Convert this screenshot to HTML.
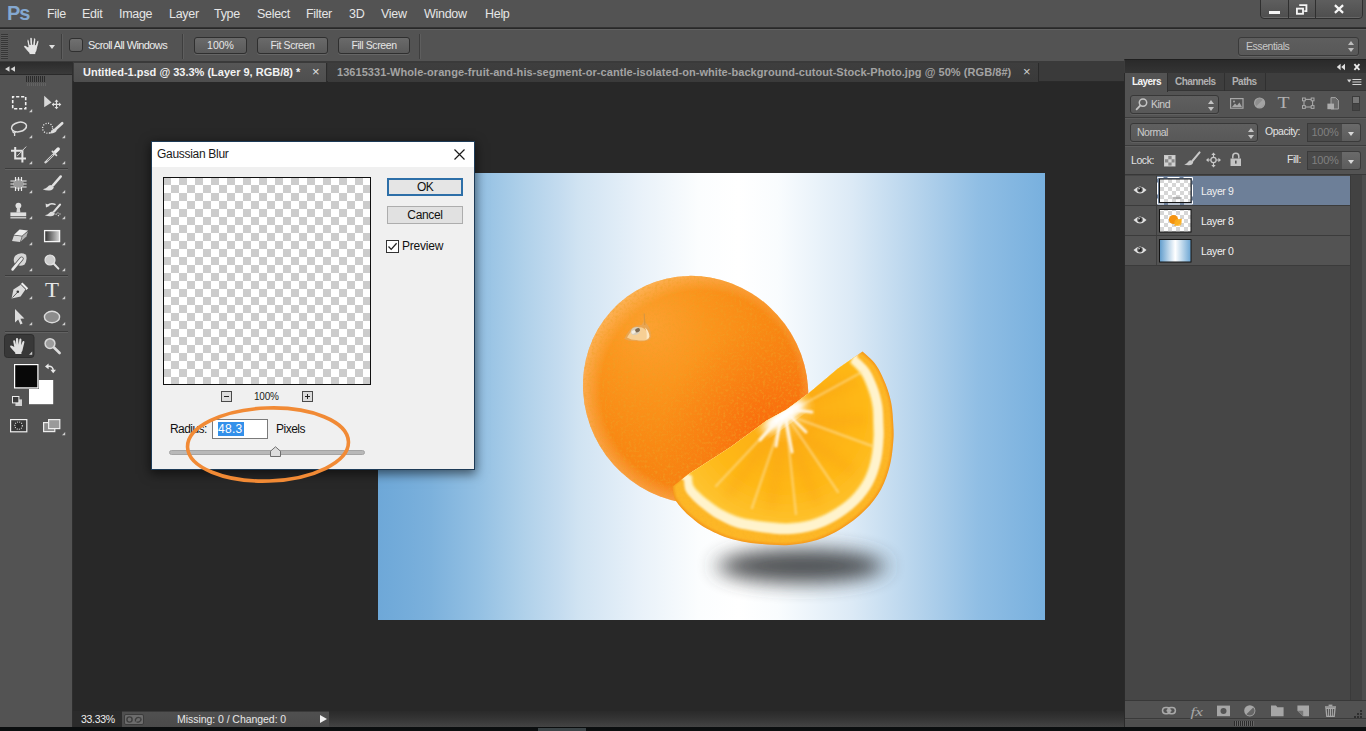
<!DOCTYPE html>
<html lang="en">
<head>
<meta charset="utf-8">
<title>Photoshop - Gaussian Blur</title>
<style>
*{box-sizing:border-box;margin:0;padding:0}
html,body{width:1366px;height:731px;overflow:hidden;background:#282828;font-family:"Liberation Sans",sans-serif;}
.abs{position:absolute}
#app{position:relative;width:1366px;height:731px;overflow:hidden;background:#282828}
/* menu bar */
#menubar{left:0;top:0;width:1366px;height:28px;background:#535353;border-bottom:1px solid #333}
#menubar span.m{position:absolute;top:7px;font-size:12.500px;color:#e6e6e6;letter-spacing:-0.3px;white-space:nowrap}
#pslogo{left:7px;top:1px;font-size:20px;font-weight:bold;color:#84a8d0;letter-spacing:-1px;line-height:24px}
/* options bar */
#optbar{left:0;top:29px;width:1366px;height:33px;background:#535353;border-top:1px solid #626262;border-bottom:1px solid #3a3a3a}
.obtn{position:absolute;top:7px;height:17px;border:1px solid #2f2f2f;border-radius:3px;background:linear-gradient(#6a6a6a,#5a5a5a);color:#e6e6e6;font-size:10.5px;text-align:center;line-height:15px;box-shadow:0 1px 0 #666}
/* tab bar */
#tabbar{left:73px;top:62px;width:1051px;height:20px;background:#3a3a3a;border-bottom:1px solid #2a2a2a}
.tab{position:absolute;top:1px;height:19px;font-size:11px;font-weight:bold;white-space:nowrap;line-height:19px}
/* tools */
#tools{left:0;top:62px;width:73px;height:665px;background:#535353;border-right:1px solid #2e2e2e}
/* right */
#rightdock{left:1124px;top:59px;width:242px;height:668px;background:#2a2a2a}
#layers{left:1125px;top:62px;width:241px;height:665px;background:#535353}
/* status */
#status{left:73px;top:711px;width:1051px;height:17px;background:linear-gradient(#2a2a2a,#333 40%,#464646)}
#bottom{left:0;top:727px;width:1366px;height:4px;background:#0b0e0f}

.ptab{top:13.500px;font-size:10px;font-weight:bold;letter-spacing:-.55px}
.dd{border:1px solid #383838;border-radius:3px;background:linear-gradient(#5f5f5f,#585858);box-shadow:0 1px 0 #606060}
.ua{width:0;height:0;border-left:3px solid transparent;border-right:3px solid transparent;border-bottom:4px solid #c4c4c4}
.da{width:0;height:0;border-left:3px solid transparent;border-right:3px solid transparent;border-top:4px solid #c4c4c4}
.hsep{left:0;width:241px;height:1px;background:#3c3c3c;box-shadow:0 1px 0 #5d5d5d}
.inp{width:36px;height:19px;border:1px solid #3a3a3a;background:#4a4a4a;color:#808080;font-size:11px;line-height:17px;text-align:center;letter-spacing:-.3px}
.ddb{width:19px;height:19px;border:1px solid #3a3a3a;border-left:none;background:linear-gradient(#6a6a6a,#5c5c5c);border-radius:0 3px 3px 0}
.ddb i{position:absolute;left:6px;top:8px;width:0;height:0;border-left:3.500px solid transparent;border-right:3.500px solid transparent;border-top:4px solid #d8d8d8}
.lrow{left:0;width:225px;height:30px;background:#535353;border-bottom:1px solid #3b3b3b}
.lrow b{position:absolute;left:31px;top:0;width:194px;height:29px;border-left:1px solid #3f3f3f;display:block}
.lname{left:76px;font-size:10.500px;color:#f0f0f0;letter-spacing:-.35px}

.zb{width:11px;height:11px;border:1px solid #4a4a4a;background:#dcdcdc}
.zb i{position:absolute;background:#222;display:block}
</style>
</head>
<body>
<div id="app">
  <!-- MENU BAR -->
  <div id="menubar" class="abs">
    <span id="pslogo" class="abs">Ps</span>
    <span class="m" style="left:47px">File</span>
    <span class="m" style="left:82px">Edit</span>
    <span class="m" style="left:119px">Image</span>
    <span class="m" style="left:169px">Layer</span>
    <span class="m" style="left:214px">Type</span>
    <span class="m" style="left:257px">Select</span>
    <span class="m" style="left:306px">Filter</span>
    <span class="m" style="left:349px">3D</span>
    <span class="m" style="left:381px">View</span>
    <span class="m" style="left:424px">Window</span>
    <span class="m" style="left:485px">Help</span>
    <div class="abs" style="left:1260px;top:-3px;width:103px;height:22px;border:1px solid #2f2f2f;border-radius:0 0 4px 4px;background:linear-gradient(#606060,#4e4e4e);box-shadow:inset 0 -1px 0 #666"></div>
    <div class="abs" style="left:1288px;top:0;width:1px;height:18px;background:#2f2f2f"></div>
    <div class="abs" style="left:1315px;top:0;width:1px;height:18px;background:#2f2f2f"></div>
    <div class="abs" style="left:1269px;top:11px;width:11px;height:3px;background:#f4f4f4"></div>
    <svg class="abs" style="left:1295px;top:4px" width="14" height="12" viewBox="0 0 14 13"><path d="M4 1.2h7.8v6.6H9.5" fill="none" stroke="#f4f4f4" stroke-width="2"/><rect x="1.5" y="5" width="6.6" height="5.6" fill="none" stroke="#f4f4f4" stroke-width="2"/></svg>
    <svg class="abs" style="left:1333px;top:4px" width="12" height="10" viewBox="0 0 12 11"><path d="M1.5 1.2 L10.5 9.8 M10.5 1.2 L1.5 9.8" stroke="#f6f6f6" stroke-width="2.4"/></svg>
  </div>
  <!-- OPTIONS BAR -->
  <div id="optbar" class="abs">
    <div class="abs" style="left:1px;top:4px;width:7px;height:25px;background:repeating-linear-gradient(#363636 0 1px,#5a5a5a 1px 2px)"></div>
    <svg class="abs" style="left:21px;top:6px" width="23" height="21" viewBox="0 0 20 18"><path d="M6.2 9.5 L5.2 4.2 Q5.1 3 6 3 Q6.9 3 7.1 4 L7.9 7.6 L7.7 2.2 Q7.7 1 8.7 1 Q9.7 1 9.8 2.2 L10.2 7.4 L10.9 2.4 Q11.1 1.4 12 1.5 Q12.9 1.6 12.8 2.8 L12.5 7.8 L13.8 4.4 Q14.2 3.5 15 3.8 Q15.8 4.1 15.5 5.2 L14.2 10.5 Q13.9 13 12.8 14.5 L12.8 16 L7.2 16 L7 14.6 Q5 12.6 2.6 9.6 Q1.9 8.6 2.8 8.1 Q3.7 7.7 4.6 8.5 Z" fill="#e4e4e4" stroke="#3a3a3a" stroke-width="0.6"/></svg>
    <div class="abs" style="left:49px;top:15px;width:0;height:0;border-left:3.5px solid transparent;border-right:3.5px solid transparent;border-top:4px solid #e0e0e0"></div>
    <div class="abs" style="left:61px;top:4px;width:1px;height:25px;background:#3e3e3e;box-shadow:1px 0 0 #5e5e5e"></div>
    <div class="abs" style="left:69px;top:8px;width:14px;height:14px;border:1px solid #303030;border-radius:3px;background:linear-gradient(#707070,#616161)"></div>
    <span class="abs" style="left:88px;top:9px;font-size:11px;color:#ececec;letter-spacing:-0.6px;white-space:nowrap">Scroll All Windows</span>
    <div class="abs" style="left:182px;top:4px;width:1px;height:25px;background:#3e3e3e;box-shadow:1px 0 0 #5e5e5e"></div>
    <div class="obtn" style="left:194px;width:53px">100%</div>
    <div class="obtn" style="left:257px;width:71px;letter-spacing:-.4px">Fit Screen</div>
    <div class="obtn" style="left:338px;width:72px;letter-spacing:-.4px">Fill Screen</div>
    <div class="abs" style="left:419px;top:4px;width:1px;height:25px;background:#3e3e3e;box-shadow:1px 0 0 #5e5e5e"></div>
    <div class="abs" style="left:1238px;top:7px;width:121px;height:19px;border:1px solid #3a3a3a;border-radius:3px;background:linear-gradient(#5e5e5e,#585858);box-shadow:0 1px 0 #616161"></div>
    <span class="abs" style="left:1246px;top:10px;font-size:10.5px;color:#c8c8c8;letter-spacing:-0.45px">Essentials</span>
    <div class="abs" style="left:1348px;top:11px;width:0;height:0;border-left:3px solid transparent;border-right:3px solid transparent;border-bottom:4px solid #bdbdbd"></div>
    <div class="abs" style="left:1348px;top:18px;width:0;height:0;border-left:3px solid transparent;border-right:3px solid transparent;border-top:4px solid #bdbdbd"></div>
  </div>
  <!-- TOOLS -->
  <div id="tools" class="abs">
    <div class="abs" style="left:0;top:0;width:72px;height:13px;background:linear-gradient(#2c2c2c,#3a3a3a);border-bottom:1px solid #2a2a2a"></div>
    <svg class="abs" style="left:0;top:0" width="73" height="400" viewBox="0 62 73 400">
      <defs>
        <linearGradient id="gradtool" x1="0" x2="1" y1="0" y2="0"><stop offset="0" stop-color="#2e2e2e"/><stop offset="1" stop-color="#d8d8d8"/></linearGradient>
        <path id="tri" d="M3.2 0 V3.2 H0 Z" fill="#cfcfcf"/>
        <path id="hand" d="M6.2 9.5 L5.2 4.2 Q5.1 3 6 3 Q6.9 3 7.1 4 L7.9 7.6 L7.7 2.2 Q7.7 1 8.7 1 Q9.7 1 9.8 2.2 L10.2 7.4 L10.9 2.4 Q11.1 1.4 12 1.5 Q12.9 1.6 12.8 2.8 L12.5 7.8 L13.8 4.4 Q14.2 3.5 15 3.8 Q15.8 4.1 15.5 5.2 L14.2 10.5 Q13.9 13 12.8 14.5 L12.8 16 L7.2 16 L7 14.6 Q5 12.6 2.6 9.6 Q1.9 8.6 2.8 8.1 Q3.7 7.7 4.6 8.5 Z"/>
      </defs>
      <!-- collapse arrows -->
      <path d="M9.5 66.3 L5 69 L9.5 71.7 Z M15 66.3 L10.5 69 L15 71.7 Z" fill="#d6d6d6"/>
      <!-- grip -->
      <g stroke="#2b2b2b" stroke-width="1"><path d="M26.5 76v6M28.5 76v6M30.5 76v6M32.5 76v6M34.5 76v6M36.5 76v6M38.5 76v6M40.5 76v6M42.5 76v6M44.5 76v6"/></g>
      <g stroke="#636363" stroke-width="1"><path d="M27.5 83v3M29.5 83v3M31.5 83v3M33.5 83v3M35.5 83v3M37.5 83v3M39.5 83v3M41.5 83v3M43.5 83v3M45.5 83v3"/></g>
      <!-- separators -->
      <g><path d="M5 168.5H68M5 275.5H68M5 331.5H68" stroke="#3c3c3c"/><path d="M5 169.5H68M5 276.5H68M5 332.5H68" stroke="#626262"/></g>
      <!-- marquee -->
      <rect x="12.7" y="96.7" width="13" height="12" fill="none" stroke="#f2f2f2" stroke-width="1.6" stroke-dasharray="3.2 1.8" stroke-dashoffset="1.6"/>
      <use href="#tri" x="29" y="109"/>
      <!-- move -->
      <path d="M44.2 95.8 V107.2 L51.6 102.6 Z" fill="#d8d8d8"/>
      <path d="M56.5 99.6 l2 2.2 h-1.4 v2 h2 v-1.4 l2.2 2 l-2.2 2 v-1.4 h-2 v2 h1.4 l-2 2.2 l-2-2.2 h1.4 v-2 h-2 v1.4 l-2.2-2 l2.2-2 v1.4 h2 v-2 h-1.4 Z" fill="#e2e2e2"/>
      <!-- lasso -->
      <ellipse cx="19" cy="127" rx="7.6" ry="4.7" transform="rotate(-12 19 127)" fill="none" stroke="#dedede" stroke-width="1.5"/>
      <path d="M13.2 130.2 q-1 2.2 1 2.6 q1.6 .2 1-1.6 M14.6 132.6 v3.4" fill="none" stroke="#dedede" stroke-width="1.3"/>
      <use href="#tri" x="29" y="135"/>
      <!-- quick select -->
      <circle cx="47.6" cy="128.2" r="5" fill="none" stroke="#e6e6e6" stroke-width="1.3" stroke-dasharray="1.1 1.5"/>
      <path d="M62.2 123.2 L55.6 129.2" stroke="#e0e0e0" stroke-width="2.6" stroke-linecap="round"/>
      <path d="M55.8 128.4 q1.8 2.2 -.6 3.8 q-2.8 1.8 -7 1.2 q3 -.8 3.6 -2.6 q.8 -2.4 4 -2.4Z" fill="#dcdcdc"/>
      <use href="#tri" x="62" y="135"/>
      <!-- crop -->
      <path d="M15.2 147 V158.6 H26 M11 150.8 H22.4 V162.4" fill="none" stroke="#e4e4e4" stroke-width="2"/>
      <path d="M26.2 146.6 L17.2 156" stroke="#d0d0d0" stroke-width="1"/>
      <use href="#tri" x="29" y="161"/>
      <!-- eyedropper -->
      <path d="M58.2 149 L54.6 152.6" stroke="#ececec" stroke-width="3.4" stroke-linecap="round"/>
      <path d="M52.4 151.4 L56.4 155.4" stroke="#d8d8d8" stroke-width="1.8" stroke-linecap="round"/>
      <path d="M54 154 L46.6 161.4 L45.4 162.4" stroke="#d4d4d4" stroke-width="2.2" stroke-linecap="round"/>
      <path d="M53 155 L47.4 160.6" stroke="#555" stroke-width=".8"/>
      <use href="#tri" x="62" y="161"/>
      <!-- healing -->
      <circle cx="18.5" cy="184" r="5.4" fill="#9a9a9a"/>
      <g stroke="#ececec" stroke-width="1.2"><path d="M15.5 177v4M18.5 177v3.4M21.5 177v4M15.5 187v4M18.5 187.6v3.4M21.5 187v4M10.4 181h4.2M10.4 184h3.4M10.4 187h4.2M22.4 181h4.2M23.2 184h3.4M22.4 187h4.2"/></g>
      <use href="#tri" x="29" y="190"/>
      <!-- brush -->
      <path d="M60.8 176.4 L53 185.4" stroke="#e2e2e2" stroke-width="2.4" stroke-linecap="round"/>
      <path d="M51.4 185 l2.4 2.2 q-.6 3 -4.4 3.2 q-3.6 .2 -6.6 -1.2 q3.6 -.6 4.6 -2.2 q1.2 -2 4 -2Z" fill="#dedede"/>
      <use href="#tri" x="62" y="190"/>
      <!-- stamp -->
      <circle cx="18.4" cy="205.6" r="2.9" fill="#e0e0e0"/>
      <path d="M17 207.5 h2.8 l.6 5 h-4Z" fill="#d8d8d8"/>
      <rect x="10.4" y="212.4" width="15.8" height="3.8" fill="#e0e0e0"/>
      <rect x="10.4" y="217.2" width="15.8" height="1.2" fill="#e0e0e0"/>
      <use href="#tri" x="29" y="216"/>
      <!-- history brush -->
      <path d="M60 204.6 L54 211.6" stroke="#e0e0e0" stroke-width="2.2" stroke-linecap="round"/>
      <path d="M52.6 211.4 l2.2 2 q-.6 2.6 -4 2.8 q-3.2 .2 -6 -1 q3.2 -.6 4.2 -2 q1 -1.8 3.600 -1.800Z" fill="#dcdcdc"/>
      <path d="M55.600 204.600 q-4.600 -2.200 -8.200 .8" fill="none" stroke="#e0e0e0" stroke-width="1.500"/>
      <path d="M45.600 203.400 l.4 4.200 l4 -1.800Z" fill="#e0e0e0"/>
      <path d="M55.600 214.400 l2.800 -1.600 M58 216 l2.600 -2.600" stroke="#dcdcdc" stroke-width="1.200" stroke-dasharray="1.200 1"/>
      <use href="#tri" x="62" y="216"/>
      <!-- eraser -->
      <path d="M19.600 229.600 L28 230.600 L22 235.800 L14 234.800Z" fill="#eeeeee"/>
      <path d="M14 235.400 L21.800 236.400 L20 242 L12 241Z" fill="#d6d6d6"/>
      <path d="M22.600 236 L28 231.400 L26.400 236.400 L20.800 241.600Z" fill="#b4b4b4"/>
      <use href="#tri" x="29" y="242"/>
      <!-- gradient -->
      <rect x="44.600" y="230.600" width="15" height="11" fill="url(#gradtool)" stroke="#f4f4f4" stroke-width="1.300"/>
      <use href="#tri" x="62" y="242"/>
      <!-- smudge -->
      <path d="M15 256 q5 -4.600 11 -1.200 q1.600 6 -1.600 10 q-4.800 2.400 -9.400 -.8 q-2.600 -4 0 -8Z" fill="#d6d6d6"/>
      <path d="M12.600 269.400 L21.600 258.600" stroke="#555" stroke-width="4.200" stroke-linecap="round"/>
      <path d="M12.600 269.400 L21.600 258.600" stroke="#e8e8e8" stroke-width="2.600" stroke-linecap="round"/>
      <use href="#tri" x="29" y="268"/>
      <!-- dodge -->
      <circle cx="50" cy="260" r="5" fill="#cdcdcd" stroke="#e4e4e4" stroke-width="1.200"/>
      <path d="M53.800 263.800 L58.400 268.600" stroke="#e2e2e2" stroke-width="2" stroke-linecap="round"/>
      <use href="#tri" x="62" y="268"/>
      <!-- pen -->
      <path d="M11.600 298.400 L13.400 289.400 L20.800 284.800 L25.400 289.600 L20.600 296.600Z" fill="#dcdcdc"/>
      <path d="M12.400 297.600 L17.400 292.400" stroke="#4a4a4a" stroke-width=".9"/>
      <circle cx="17.800" cy="291.800" r="1.300" fill="#3a3a3a"/>
      <path d="M22.400 282.400 L28.200 288.200 L26.400 290 L20.600 284.200Z" fill="#f0f0f0"/>
      <path d="M21.200 284.600 L26 289.400" stroke="#505050" stroke-width=".8"/>
      <use href="#tri" x="29" y="296"/>
      <!-- type -->
      <text x="45" y="297.300" font-family="'Liberation Serif',serif" font-size="20" fill="#e6e6e6" textLength="14" lengthAdjust="spacingAndGlyphs">T</text>
      <use href="#tri" x="62" y="296"/>
      <!-- path select -->
      <path d="M15 309 V322.400 L18.200 319.600 L20.400 324.600 L22.600 323.600 L20.400 318.800 L24.400 318.400Z" fill="#dcdcdc"/>
      <use href="#tri" x="29" y="322"/>
      <!-- ellipse -->
      <ellipse cx="52" cy="317" rx="7.600" ry="5.700" fill="#8c8c8c" stroke="#dcdcdc" stroke-width="1.400"/>
      <use href="#tri" x="62" y="322"/>
      <!-- hand selected -->
      <rect x="4.500" y="334.500" width="29.500" height="23" rx="3" fill="#383838" stroke="#2e2e2e"/>
      <use href="#hand" transform="translate(7.600 337) scale(1.080 1.060)" fill="#e0e0e0"/>
      <use href="#tri" x="29" y="351.500"/>
      <!-- zoom -->
      <circle cx="50" cy="343.600" r="4.900" fill="#9c9c9c" stroke="#d8d8d8" stroke-width="1.500"/>
      <path d="M54.200 347.800 L59.600 353" stroke="#dcdcdc" stroke-width="2.600" stroke-linecap="round"/>
      <!-- swatches -->
      <rect x="29" y="380" width="24.200" height="24.200" fill="#ffffff"/>
      <rect x="13.500" y="363.500" width="25.500" height="25.500" fill="#505050"/>
      <rect x="14.600" y="364.600" width="23.300" height="23.300" fill="#080808" stroke="#ffffff" stroke-width="1.200"/>
      <path d="M48 366.400 q5.400 -.6 5.200 4.600" fill="none" stroke="#e8e8e8" stroke-width="1.500"/>
      <path d="M45 366.400 l3.600 -2.800 v5.600Z M53.200 373.200 l-2.800 -3.400 h5.600Z" fill="#e8e8e8"/>
      <rect x="15.400" y="399.400" width="6.600" height="6.600" fill="#d0d0d0"/>
      <rect x="12.500" y="396.500" width="6.400" height="6.400" fill="#3c3c3c" stroke="#ececec" stroke-width="1"/>
      <!-- quick mask -->
      <rect x="10.600" y="419.600" width="16.200" height="12.200" fill="#3a3a3a" stroke="#f0f0f0" stroke-width="1.200"/>
      <circle cx="18.600" cy="425.600" r="3.700" fill="#2c2c2c" stroke="#e0e0e0" stroke-width="1.100" stroke-dasharray="1 1.200"/>
      <!-- screen mode -->
      <rect x="43.600" y="422.600" width="11.200" height="9" fill="#8a8a8a" stroke="#ececec" stroke-width="1.200"/>
      <rect x="48.600" y="419.600" width="11.200" height="9" fill="#9a9a9a" stroke="#ececec" stroke-width="1.200"/>
      <use href="#tri" x="62" y="432"/>
    </svg>
  </div>
  <!-- TAB BAR -->
  <div id="tabbar" class="abs">
    <div class="abs" style="left:1px;top:1px;width:253px;height:19px;background:linear-gradient(#565656,#4e4e4e);border-right:1px solid #2c2c2c"></div>
    <span class="tab" style="left:10px;color:#f2f2f2">Untitled-1.psd @ 33.3% (Layer 9, RGB/8) *</span>
    <span class="abs" style="left:239px;top:1px;font-size:13px;color:#e0e0e0;line-height:18px">×</span>
    <div class="abs" style="left:255px;top:1px;width:711px;height:19px;background:linear-gradient(#3e3e3e,#3a3a3a);border-right:1px solid #2a2a2a"></div>
    <span class="tab" style="left:264px;color:#a3a3a3;letter-spacing:.055px">13615331-Whole-orange-fruit-and-his-segment-or-cantle-isolated-on-white-background-cutout-Stock-Photo.jpg @ 50% (RGB/8#)</span>
    <span class="abs" style="left:950px;top:1px;font-size:13px;color:#d0d0d0;line-height:18px">×</span>
  </div>
  <!-- CANVAS -->
  <div id="canvas" class="abs" style="left:378px;top:173px;width:667px;height:447px;background:linear-gradient(90deg,#6ea8d8 0%,#74acda 4%,#7cb1dc 8%,#93c0e3 15%,#b0d1ea 22%,#c3dbef 27%,#d0e3f2 30%,#e8f1f9 39%,#fbfdfe 48%,#ffffff 54%,#f9fcfe 60%,#dceaf6 71%,#b5d3ec 81%,#90bee4 90%,#78b0de 100%)"></div>
  <svg class="abs" style="left:378px;top:173px" width="667" height="447" viewBox="378 173 667 447">
    <defs>
      <radialGradient id="og" gradientUnits="userSpaceOnUse" cx="668" cy="350" r="175" fx="650" fy="325">
        <stop offset="0" stop-color="#fca131"/><stop offset=".3" stop-color="#fb951d"/><stop offset=".6" stop-color="#f98914"/><stop offset="1" stop-color="#f67c10"/>
      </radialGradient>
      <radialGradient id="ogshade" gradientUnits="userSpaceOnUse" cx="775" cy="438" r="115">
        <stop offset="0" stop-color="#fb640a" stop-opacity=".95"/><stop offset=".45" stop-color="#fa6c0e" stop-opacity=".5"/><stop offset="1" stop-color="#f87812" stop-opacity="0"/>
      </radialGradient>
      <radialGradient id="ogrim" gradientUnits="userSpaceOnUse" cx="700" cy="390" r="118"><stop offset=".84" stop-color="#ffd39a" stop-opacity="0"/><stop offset="1" stop-color="#ffd39a" stop-opacity=".45"/></radialGradient>
      <clipPath id="oc"><ellipse cx="695.600" cy="389.900" rx="115.700" ry="110.900" transform="rotate(53.600 695.600 389.900)"/></clipPath>
      <radialGradient id="flesh" gradientUnits="userSpaceOnUse" cx="786" cy="412" r="125">
        <stop offset="0" stop-color="#fdc448"/><stop offset=".25" stop-color="#fdb018"/><stop offset=".65" stop-color="#feb818"/><stop offset="1" stop-color="#fec534"/>
      </radialGradient>
      <filter id="blur9" x="-30%" y="-150%" width="160%" height="400%"><feGaussianBlur stdDeviation="11 9.500"/></filter>
      <filter id="blur1"><feGaussianBlur stdDeviation="1.200"/></filter>
      <filter id="blur2"><feGaussianBlur stdDeviation="2.500"/></filter>
      <filter id="blur4"><feGaussianBlur stdDeviation="4"/></filter>
      <filter id="peel" x="0" y="0" width="100%" height="100%"><feTurbulence type="fractalNoise" baseFrequency=".38" numOctaves="2" seed="4" result="n"/><feColorMatrix in="n" type="matrix" values="0 0 0 0 .85  0 0 0 0 .36  0 0 0 0 .02  0 0 0 -2.400 1.300" result="c"/><feComposite in="c" in2="SourceGraphic" operator="in"/></filter>
      <clipPath id="wedge"><path d="M672.6 486.5 C673.0 488.6 672.9 494.7 674.8 498.8 C676.7 502.9 680.8 507.5 684.2 511.1 C687.6 514.8 691.2 517.7 695.1 520.7 C699.0 523.7 702.2 526.1 707.5 528.9 C712.8 531.7 720.9 535.5 726.6 537.6 C732.4 539.7 736.2 540.4 742.0 541.4 C747.8 542.4 753.4 543.3 761.3 543.9 C769.2 544.5 779.9 545.6 789.2 545.0 C798.5 544.4 808.4 542.8 817.1 540.1 C825.9 537.4 833.8 533.5 841.7 528.6 C849.6 523.7 858.1 517.2 864.7 510.6 C871.3 504.0 876.9 496.9 881.1 489.2 C885.3 481.5 888.1 472.8 890.1 464.6 C892.1 456.4 892.9 446.7 893.4 440.0 C893.9 433.3 893.6 430.4 893.3 424.3 C892.9 418.2 892.6 409.9 891.3 403.2 C890.0 396.5 888.1 390.4 885.6 384.0 C883.1 377.6 879.8 370.3 876.0 364.9 C872.2 359.5 864.8 353.7 862.6 351.5 L838.0 368.5 L809.0 393.0 L786.0 410.0 L766.7 420.5 L731.0 446.7 L688.0 474.5 L672.6 486.5Z"/></clipPath>
    </defs>
    <!-- drop shadow -->
    <ellipse cx="801" cy="566" rx="83" ry="17" fill="#3e4043" opacity=".9" filter="url(#blur9)"/>
    <!-- whole orange -->
    <g clip-path="url(#oc)">
      <rect x="570" y="265" width="260" height="250" fill="url(#og)"/>
      <rect x="570" y="265" width="260" height="250" fill="url(#ogshade)"/>
      <rect x="570" y="265" width="260" height="250" fill="url(#ogrim)"/>
      <rect x="570" y="265" width="260" height="250" fill="#f28a20" filter="url(#peel)" opacity=".6"/>
      <!-- stem -->
      <path d="M624.500 338.500 q3 -7 8 -11 q4 -3 9 -2.500 l2 -3 l.8 -8.500 l1 9 q5 4 5.500 12 q.5 5 -3 6 q-6 1.500 -12 .5 q-7 .5 -12.300 -2.500Z" fill="#e9a552"/>
      <path d="M627 337.500 q3 -5.500 7 -8.500 q4 -2.500 8 -1.500 q5 2 6.500 9 q.2 3 -2 3.500 q-5 1 -10 0 q-5 .2 -9.500 -2.500Z" fill="#f7cf94"/>
      <path d="M645 327.500 q4 3 4.500 9 q-.5 2.500 -3 2.500 q1 -6 -1.500 -11.500Z" fill="#fde8c4"/>
      <ellipse cx="635.500" cy="331" rx="5" ry="3.800" transform="rotate(-25 635.500 331)" fill="#d9cdb8"/>
      <ellipse cx="637.500" cy="330.200" rx="2.600" ry="2" transform="rotate(-25 637.500 330.200)" fill="#7d6a52"/>
      <ellipse cx="633.500" cy="332" rx="2.200" ry="1.600" transform="rotate(-25 633.500 332)" fill="#f4eee2"/>
      <path d="M644.200 313.500 L644.800 325" stroke="#d9963f" stroke-width="1.200"/>
    </g>
    <!-- slice -->
    <g clip-path="url(#wedge)">
      <rect x="660" y="340" width="245" height="215" fill="#f5981c"/>
      <path d="M672.6 486.5 C673.0 488.6 672.9 494.7 674.8 498.8 C676.7 502.9 680.8 507.5 684.2 511.1 C687.6 514.8 691.2 517.7 695.1 520.7 C699.0 523.7 702.2 526.1 707.5 528.9 C712.8 531.7 720.9 535.5 726.6 537.6 C732.4 539.7 736.2 540.4 742.0 541.4 C747.8 542.4 753.4 543.3 761.3 543.9 C769.2 544.5 779.9 545.6 789.2 545.0 C798.5 544.4 808.4 542.8 817.1 540.1 C825.9 537.4 833.8 533.5 841.7 528.6 C849.6 523.7 858.1 517.2 864.7 510.6 C871.3 504.0 876.9 496.9 881.1 489.2 C885.3 481.5 888.1 472.8 890.1 464.6 C892.1 456.4 892.9 446.7 893.4 440.0 C893.9 433.3 893.6 430.4 893.3 424.3 C892.9 418.2 892.6 409.9 891.3 403.2 C890.0 396.5 888.1 390.4 885.6 384.0 C883.1 377.6 879.8 370.3 876.0 364.9 C872.2 359.5 864.8 353.7 862.6 351.5 L838.0 368.5 L809.0 393.0 L786.0 410.0 L766.7 420.5 L731.0 446.7 L688.0 474.5 L672.6 486.5Z" transform="translate(779 428) scale(.985) translate(-779 -428)" fill="#fdb728" filter="url(#blur1)"/>
      <rect x="660" y="340" width="245" height="215" fill="#f29018" filter="url(#peel)" opacity=".14"/>
      <path d="M684.0 480.3 C684.3 482.1 684.1 487.7 685.9 491.3 C687.7 494.8 691.7 498.6 694.8 501.8 C698.0 504.9 701.2 507.5 704.7 510.1 C708.1 512.8 710.9 515.1 715.4 517.7 C720.0 520.3 727.1 523.9 732.2 525.9 C737.3 527.9 740.7 528.5 745.8 529.6 C751.0 530.7 756.0 531.6 763.1 532.4 C770.1 533.1 779.8 534.6 788.3 534.2 C796.7 533.9 805.7 532.6 813.8 530.3 C821.8 527.9 829.1 524.5 836.4 520.2 C843.8 515.8 851.8 510.0 857.9 504.0 C863.9 498.0 869.0 491.3 872.8 484.2 C876.6 477.2 879.0 469.1 880.8 461.5 C882.6 454.0 883.1 445.1 883.5 439.0 C884.0 432.8 883.6 430.2 883.4 424.6 C883.2 419.0 883.2 411.4 882.2 405.2 C881.2 399.0 879.7 393.3 877.5 387.3 C875.3 381.4 872.6 374.5 869.2 369.4 C865.7 364.2 859.0 358.8 857.0 356.7 L887.0 296.7 L624.0 450.3 Z" fill="#fff3cc" filter="url(#blur1)"/>
      <path d="M691.0 476.4 C691.3 478.1 691.0 483.3 692.7 486.6 C694.5 489.9 698.4 493.2 701.4 496.0 C704.4 498.8 707.5 501.0 710.8 503.4 C714.0 505.8 716.5 507.8 720.8 510.2 C725.0 512.5 731.6 515.7 736.3 517.4 C740.9 519.1 744.1 519.6 748.8 520.5 C753.5 521.4 758.1 522.0 764.5 522.7 C771.0 523.3 779.7 524.6 787.4 524.4 C795.1 524.1 803.3 523.2 810.7 521.2 C818.0 519.2 824.7 516.2 831.5 512.3 C838.3 508.4 845.8 503.2 851.4 497.8 C857.0 492.3 861.6 486.1 865.1 479.6 C868.6 473.1 870.7 465.6 872.2 458.7 C873.8 451.8 874.2 443.7 874.6 438.0 C874.9 432.4 874.6 430.1 874.5 424.9 C874.3 419.8 874.5 412.8 873.7 407.1 C872.9 401.4 871.6 396.1 869.6 390.6 C867.7 385.0 865.3 378.6 862.2 373.9 C859.1 369.1 852.9 364.1 851.0 362.1 L881.0 302.1 L631.0 446.4 Z" fill="#fde7a0" filter="url(#blur1)"/>
      <path d="M691.0 476.4 C691.3 478.1 691.0 483.3 692.7 486.6 C694.5 489.9 698.4 493.2 701.4 496.0 C704.4 498.8 707.5 501.0 710.8 503.4 C714.0 505.8 716.5 507.8 720.8 510.2 C725.0 512.5 731.6 515.7 736.3 517.4 C740.9 519.1 744.1 519.6 748.8 520.5 C753.5 521.4 758.1 522.0 764.5 522.7 C771.0 523.3 779.7 524.6 787.4 524.4 C795.1 524.1 803.3 523.2 810.7 521.2 C818.0 519.2 824.7 516.2 831.5 512.3 C838.3 508.4 845.8 503.2 851.4 497.8 C857.0 492.3 861.6 486.1 865.1 479.6 C868.6 473.1 870.7 465.6 872.2 458.7 C873.8 451.8 874.2 443.7 874.6 438.0 C874.9 432.4 874.6 430.1 874.5 424.9 C874.3 419.8 874.5 412.8 873.7 407.1 C872.9 401.4 871.6 396.1 869.6 390.6 C867.7 385.0 865.3 378.6 862.2 373.9 C859.1 369.1 852.9 364.1 851.0 362.1 L881.0 302.1 L631.0 446.4 Z" transform="translate(779 428) scale(.985) translate(-779 -428)" fill="url(#flesh)" filter="url(#blur1)"/>
      <g stroke="#f99a10" stroke-width="9" stroke-linecap="round" opacity=".26" filter="url(#blur4)">
        <path d="M806 424 L862 420"/><path d="M800 434 L850 470"/><path d="M792 442 L816 500"/><path d="M780 444 L772 504"/><path d="M770 438 L730 492"/><path d="M815 396 L852 382"/>
      </g>
      <g stroke="#fee6ae" stroke-width="2.400" stroke-linecap="round" opacity=".5" filter="url(#blur1)">
        <path d="M800 406 L862 372"/><path d="M790 416 L872 446"/><path d="M788 418 L838 492"/><path d="M786 420 L796 514"/><path d="M782 420 L752 508"/><path d="M776 422 L716 486"/>
      </g>
      <ellipse cx="784" cy="416" rx="27" ry="8" transform="rotate(-35 784 416)" fill="#fff4d8" filter="url(#blur4)"/>
      <ellipse cx="785" cy="415" rx="20" ry="5.500" transform="rotate(-35 785 415)" fill="#ffffff" filter="url(#blur2)"/>
      <g stroke="#fffaf0" stroke-width="3" stroke-linecap="round" filter="url(#blur1)" opacity=".9"><path d="M795 410 L812 412"/><path d="M790 416 L806 432"/><path d="M786 420 L792 452"/><path d="M780 422 L776 446"/><path d="M774 424 L760 440"/></g>
    </g>
  </svg>
  <!-- RIGHT PANEL -->
  <div id="rightdock" class="abs"></div>
  <div id="layers" class="abs">
    <!-- header strip -->
    <div class="abs" style="left:-1px;top:-3px;width:242px;height:14px;background:linear-gradient(#2a2a2a,#343434);border-left:1px solid #3c3c3c;border-top:1px solid #1f1f1f"></div>
    <svg class="abs" style="left:211px;top:1px" width="26" height="8" viewBox="0 0 26 8"><path d="M4.600 .8 L.8 4 L4.600 7.200Z M9 .8 L5.200 4 L9 7.200Z" fill="#e0e0e0"/><path d="M18.400 1.200 L23.400 6.800 M23.400 1.200 L18.400 6.800" stroke="#ececec" stroke-width="1.800"/></svg>
    <!-- tab row -->
    <div class="abs" style="left:0;top:11px;width:241px;height:18px;background:#3e3e3e;border-bottom:1px solid #353535"></div>
    <div class="abs" style="left:0;top:11px;width:43px;height:19px;background:#535353;border-right:1px solid #303030"></div>
    <div class="abs" style="left:99px;top:11px;width:1px;height:18px;background:#303030"></div>
    <div class="abs" style="left:140px;top:11px;width:1px;height:18px;background:#303030"></div>
    <span class="abs ptab" style="left:7px;color:#f4f4f4">Layers</span>
    <span class="abs ptab" style="left:50px;color:#b0b0b0">Channels</span>
    <span class="abs ptab" style="left:107px;color:#b0b0b0">Paths</span>
    <svg class="abs" style="left:222px;top:16px" width="15" height="8" viewBox="0 0 15 8"><path d="M0 1.500 h4.400 l-2.200 3Z" fill="#d6d6d6"/><path d="M5.400 1.500 H14.400 M5.400 4 H14.400 M5.400 6.500 H14.400" stroke="#d6d6d6" stroke-width="1.200"/></svg>
    <!-- filter row -->
    <div class="abs dd" style="left:5px;top:33px;width:89px;height:19px"></div>
    <svg class="abs" style="left:10px;top:35px" width="14" height="14" viewBox="0 0 14 14"><circle cx="8" cy="5.600" r="3.700" fill="none" stroke="#c4c4c4" stroke-width="1.500"/><path d="M5.400 8.400 L1.600 12.400" stroke="#c4c4c4" stroke-width="1.800" stroke-linecap="round"/></svg>
    <span class="abs" style="left:26px;top:36px;font-size:10.500px;color:#cccccc;letter-spacing:-.5px">Kind</span>
    <div class="abs ua" style="left:83px;top:38px"></div><div class="abs da" style="left:83px;top:45px"></div>
    <svg class="abs" style="left:103px;top:34px" width="136" height="18" viewBox="1228 96 136 18">
      <rect x="1230.600" y="98.600" width="12.400" height="9.600" fill="none" stroke="#a8a8a8" stroke-width="1.200"/><path d="M1232 107 l3-3.600 l2 2 l2.400-3 l2.600 4.600Z" fill="#a8a8a8"/><circle cx="1234" cy="101.600" r="1" fill="#a8a8a8"/>
      <circle cx="1259.600" cy="103" r="5" fill="#8e8e8e" stroke="#a4a4a4" stroke-width="1.200"/><path d="M1263 99.400 a5 5 0 0 1 -7 7Z" fill="#a4a4a4"/>
      <text x="1277.400" y="108.400" font-family="'Liberation Serif',serif" font-size="16" fill="#b0b0b0" textLength="12" lengthAdjust="spacingAndGlyphs">T</text>
      <rect x="1304" y="99.400" width="8.600" height="7.600" fill="none" stroke="#a8a8a8" stroke-width="1.100"/><g fill="#535353" stroke="#a8a8a8" stroke-width="1"><rect x="1302.500" y="98" width="2.800" height="2.800"/><rect x="1311.200" y="98" width="2.800" height="2.800"/><rect x="1302.500" y="105.600" width="2.800" height="2.800"/><rect x="1311.200" y="105.600" width="2.800" height="2.800"/></g>
      <path d="M1331 97.600 h4.600 l2.800 2.800 v8.600 h-7.400Z" fill="#6a6a6a" stroke="#a4a4a4" stroke-width="1"/><rect x="1327.400" y="103.600" width="6.600" height="5.600" fill="#acacac"/>
      <rect x="1352.500" y="96.500" width="7" height="7" fill="#767676" stroke="#3c3c3c"/><rect x="1352.500" y="103.500" width="7" height="7" fill="#444" stroke="#3c3c3c"/>
    </svg>
    <div class="abs hsep" style="top:55px"></div>
    <!-- blend row -->
    <div class="abs dd" style="left:5px;top:61px;width:128px;height:19px"></div>
    <span class="abs" style="left:12px;top:64px;font-size:10.500px;color:#cccccc;letter-spacing:-.5px">Normal</span>
    <div class="abs ua" style="left:123px;top:66px"></div><div class="abs da" style="left:123px;top:73px"></div>
    <span class="abs" style="left:140px;top:63px;font-size:10.500px;color:#e2e2e2;letter-spacing:-.45px">Opacity:</span>
    <div class="abs inp" style="left:182px;top:61px">100%</div>
    <div class="abs ddb" style="left:217px;top:61px"><i></i></div>
    <div class="abs hsep" style="top:83px"></div>
    <!-- lock row -->
    <span class="abs" style="left:6px;top:92px;font-size:10.500px;color:#e2e2e2;letter-spacing:-.42px">Lock:</span>
    <svg class="abs" style="left:37px;top:88px" width="84" height="18" viewBox="1162 150 84 18">
      <rect x="1164.500" y="155.500" width="10.500" height="10.500" fill="#8a8a8a" stroke="#c8c8c8" stroke-width="1"/><path d="M1165 156 h3.300 v3.300 h-3.300Z M1171.600 156 h3.300 v3.300 h-3.300Z M1168.300 159.300 h3.300 v3.300 h-3.300Z M1165 162.600 h3.300 v3.300 h-3.300Z M1171.600 162.600 h3.300 v3.300 h-3.300Z" fill="#d2d2d2"/>
      <path d="M1199.600 152.400 L1192.400 161" stroke="#c8c8c8" stroke-width="2" stroke-linecap="round"/><path d="M1191 160.200 l2.200 2 q-.6 2.800 -4 3 q-2.600 .2 -5 -.8 q2.800 -.6 3.600 -2.200 q1 -1.800 3.200 -2Z" fill="#c8c8c8"/>
      <g stroke="#c8c8c8" stroke-width="1.200" fill="none"><path d="M1213.500 154 V166 M1207.500 160 H1219.500"/><circle cx="1213.500" cy="160" r="2.600" fill="#535353"/></g><path d="M1213.500 152.400 l2.200 2.600 h-4.400Z M1213.500 167.600 l2.200-2.600 h-4.400Z M1206 160 l2.600-2.200 v4.400Z M1221 160 l-2.600-2.200 v4.400Z" fill="#c8c8c8"/>
      <rect x="1230.500" y="158.500" width="10.500" height="7.500" fill="#c4c4c4"/><path d="M1232.800 158.500 v-2.200 a3 3 0 0 1 6 0 v2.200" fill="none" stroke="#c4c4c4" stroke-width="1.500"/><rect x="1235" y="160.600" width="1.600" height="3" fill="#555"/>
    </svg>
    <span class="abs" style="left:162px;top:91px;font-size:10.500px;color:#e2e2e2;letter-spacing:-.5px">Fill:</span>
    <div class="abs inp" style="left:182px;top:89px">100%</div>
    <div class="abs ddb" style="left:217px;top:89px"><i></i></div>
    <!-- layer list -->
    <div class="abs" style="left:0;top:112px;width:241px;height:527px;background:#464646;border-top:1px solid #383838"></div>
    <div class="abs" style="left:225px;top:113px;width:12px;height:525px;background:#424242;border-left:1px solid #3a3a3a"></div>
    <div class="abs" style="left:237px;top:113px;width:4px;height:525px;background:#4d4d4d"></div>
    <div class="abs lrow" style="top:114px"><b style="background:#6d7f98"></b></div>
    <div class="abs lrow" style="top:144px"><b></b></div>
    <div class="abs lrow" style="top:174px"><b></b></div>
    <span class="abs lname" style="top:123px">Layer 9</span>
    <span class="abs lname" style="top:153px">Layer 8</span>
    <span class="abs lname" style="top:183px">Layer 0</span>
    <svg class="abs" style="left:0;top:113px" width="80" height="92" viewBox="1125 175 80 92">
      <defs>
        <pattern id="chk" x="1160" y="179" width="8" height="8" patternUnits="userSpaceOnUse"><rect width="8" height="8" fill="#fff"/><rect width="4" height="4" fill="#d6d6d6"/><rect x="4" y="4" width="4" height="4" fill="#d6d6d6"/></pattern>
        <linearGradient id="l0" x1="0" x2="1"><stop offset="0" stop-color="#5f9ccc"/><stop offset=".5" stop-color="#ffffff"/><stop offset="1" stop-color="#6aa5d3"/></linearGradient>
        <g id="eye"><path d="M0 0 q6.500 -7 13 0 q-6.500 7 -13 0Z" fill="#e2e2e2"/><circle cx="6.500" cy="-.2" r="2.700" fill="#4a4a4a"/><circle cx="6.500" cy="-.2" r="1.300" fill="#1e1e1e"/><circle cx="5.600" cy="-1.200" r=".7" fill="#eee"/></g>
      </defs>
      <use href="#eye" x="1133.500" y="190"/><use href="#eye" x="1133.500" y="220"/><use href="#eye" x="1133.500" y="250"/>
      <rect x="1157.500" y="177.500" width="35" height="26.500" fill="none" stroke="#fff" stroke-width="1" stroke-dasharray="12 4" stroke-dashoffset="6"/>
      <rect x="1159.500" y="179" width="31.500" height="23.500" fill="url(#chk)" stroke="#151515" stroke-width="1"/>
      <ellipse cx="1177" cy="198" rx="5" ry="1.200" fill="#999" opacity=".7"/>
      <rect x="1159.500" y="209.500" width="31.500" height="22.500" fill="url(#chk)" stroke="#151515" stroke-width="1"/>
      <circle cx="1173.500" cy="219.500" r="4.600" fill="#f5930f"/><path d="M1174 226 q7.500 -.5 8 -7.500 q-5 1 -8 7.500Z" fill="#fbb021"/><circle cx="1178" cy="222.500" r="3.600" fill="#fbb021" opacity=".8"/>
      <rect x="1159.500" y="239.500" width="31.500" height="22.500" fill="url(#l0)" stroke="#151515" stroke-width="1"/>
    </svg>
    <!-- footer -->
    <div class="abs" style="left:0;top:638px;width:241px;height:19px;background:#525252;border-top:1px solid #383838;border-bottom:1px solid #3a3a3a"></div>
    <svg class="abs" style="left:30px;top:640px" width="211" height="18" viewBox="1155 702 211 18">
      <g fill="none" stroke="#a8a8a8" stroke-width="1.500"><rect x="1162.500" y="707.400" width="7.600" height="6.400" rx="3.200"/><rect x="1167.800" y="707.400" width="7.600" height="6.400" rx="3.200"/></g><path d="M1166.500 710.600 h5" stroke="#a8a8a8" stroke-width="1.600"/>
      <text x="1190.500" y="716" font-family="'Liberation Serif',serif" font-style="italic" font-size="13.500" fill="#a6a6a6" textLength="12.500" lengthAdjust="spacingAndGlyphs">fx</text>
      <rect x="1217" y="705.600" width="13" height="10.600" fill="#a6a6a6"/><circle cx="1223.500" cy="710.900" r="3" fill="#555"/>
      <circle cx="1249.800" cy="710.800" r="5.600" fill="#a6a6a6"/><path d="M1253.200 707.400 a4.600 4.600 0 0 1 -6.800 6.800Z" fill="#666"/>
      <path d="M1271 705.400 h5 l1.400 1.800 h6.200 v9 h-12.600Z" fill="#a6a6a6"/>
      <path d="M1297.400 705.400 h11.600 v10.800 h-5.800 l-5.800-5.400Z" fill="#a6a6a6"/><path d="M1297.400 710.800 h5.800 v5.400Z" fill="#777"/>
      <path d="M1326 708.400 h9 l-.8 8 h-7.400Z" fill="none" stroke="#a6a6a6" stroke-width="1.300"/><path d="M1328.600 709 v7 M1330.500 709 v7 M1332.400 709 v7" stroke="#a6a6a6" stroke-width="1"/><path d="M1325 707 h11" stroke="#a6a6a6" stroke-width="1.500"/><rect x="1328.600" y="704.600" width="3.800" height="1.800" fill="#a6a6a6"/>
      <g fill="#2e2e2e"><rect x="1360" y="710" width="2" height="2"/><rect x="1357" y="713" width="2" height="2"/><rect x="1360" y="713" width="2" height="2"/><rect x="1354" y="716" width="2" height="2"/><rect x="1357" y="716" width="2" height="2"/><rect x="1360" y="716" width="2" height="2"/></g>
    </svg>
    <div class="abs" style="left:0;top:658px;width:241px;height:7px;background:#4e4e4e"></div>
    <div class="abs" style="left:109px;top:659px;width:20px;height:5px;background:repeating-linear-gradient(90deg,#2b2b2b 0 1px,#666 1px 2px)"></div>
  </div>
  <!-- STATUS -->
  <div id="status" class="abs">
    <div class="abs" style="left:0;top:0;width:49px;height:17px;background:#2b2b2b"></div>
    <div class="abs" style="left:49px;top:0;width:207px;height:17px;background:linear-gradient(#505050,#4a4a4a);border-top:1px solid #3a3a3a"></div>
    <span class="abs" style="left:8px;top:2px;font-size:10.500px;color:#efefef;letter-spacing:-.3px">33.33%</span>
    <div class="abs" style="left:51px;top:3px;width:20px;height:11px;background:#6c6c6c;border:1px solid #3c3c3c;border-radius:2px"></div>
    <svg class="abs" style="left:52px;top:4px" width="18" height="9" viewBox="0 0 18 9"><circle cx="4.500" cy="4.500" r="2.600" fill="none" stroke="#3e3e3e" stroke-width="1.400"/><path d="M10.500 6.500 a3 3 0 0 1 4.500 -3.500 M15.500 2.500 a3 3 0 0 1 -4 4.200" fill="none" stroke="#3e3e3e" stroke-width="1.300"/></svg>
    <span class="abs" style="left:104px;top:2px;font-size:10.500px;color:#e8e8e8;letter-spacing:-.05px;white-space:nowrap">Missing: 0 / Changed: 0</span>
    <div class="abs" style="left:247px;top:4px;width:0;height:0;border-top:4.500px solid transparent;border-bottom:4.500px solid transparent;border-left:7px solid #f0f0f0"></div>
  </div>
  <div id="bottom" class="abs"><div class="abs" style="left:538px;top:1px;width:48px;height:3px;background:#3b4447"></div></div>
  <!-- DIALOG -->
  <div id="dialog" class="abs" style="left:152px;top:142px;width:322px;height:327px;background:#f0f0f0;box-shadow:0 0 0 1px #1d3b57,0 3px 10px 2px rgba(0,0,0,.55);font-family:'Liberation Sans',sans-serif;color:#111">
    <div class="abs" style="left:0;top:0;width:322px;height:25px;background:#ffffff"></div>
    <span class="abs" style="left:5px;top:5px;font-size:12px;letter-spacing:-.3px;color:#1a1a1a">Gaussian Blur</span>
    <svg class="abs" style="left:302px;top:7px" width="11" height="11" viewBox="0 0 11 11"><path d="M.5 .5 L10.500 10.500 M10.500 .5 L.5 10.500" stroke="#1a1a1a" stroke-width="1.200"/></svg>
    <!-- preview -->
    <div class="abs" style="left:11px;top:35px;width:208px;height:208px;border:1px solid #111;background-color:#fff;background-image:linear-gradient(45deg,#ccc 25%,transparent 25%,transparent 75%,#ccc 75%),linear-gradient(45deg,#ccc 25%,transparent 25%,transparent 75%,#ccc 75%);background-size:16px 16px;background-position:7px -1px,15px 7px"></div>
    <!-- buttons -->
    <div class="abs" style="left:235px;top:36px;width:76px;height:18px;border:2px solid #2d6fa8;background:#e5e5e5;font-size:12px;line-height:14px;text-align:center;letter-spacing:-.6px">OK</div>
    <div class="abs" style="left:235px;top:64px;width:76px;height:18px;border:1px solid #adadad;background:#e1e1e1;font-size:12px;line-height:16px;text-align:center;letter-spacing:-.35px">Cancel</div>
    <div class="abs" style="left:234px;top:98px;width:13px;height:13px;border:1px solid #333;background:#fff"></div>
    <svg class="abs" style="left:235px;top:99px" width="11" height="11" viewBox="0 0 11 11"><path d="M1.500 5.500 L4.200 8.400 L9.600 2.200" fill="none" stroke="#222" stroke-width="1.300"/></svg>
    <span class="abs" style="left:250px;top:97px;font-size:12px;letter-spacing:-.2px">Preview</span>
    <!-- zoom controls -->
    <div class="abs zb" style="left:69px;top:249px"><i style="left:2px;top:4px;width:5px;height:1px"></i></div>
    <span class="abs" style="left:102px;top:249px;font-size:10px;letter-spacing:-.2px;color:#222">100%</span>
    <div class="abs zb" style="left:150px;top:249px"><i style="left:2px;top:4px;width:5px;height:1px"></i><i style="left:4px;top:2px;width:1px;height:5px"></i></div>
    <!-- radius -->
    <span class="abs" style="left:18px;top:280px;font-size:12px;letter-spacing:-.55px">Radius:</span>
    <div class="abs" style="left:60px;top:277px;width:56px;height:20px;border:1px solid #7a7a7a;background:#fff"></div>
    <span class="abs" style="left:66px;top:280px;height:14px;background:#3390ea;color:#fff;font-size:12px;line-height:14px;letter-spacing:.3px;padding:0 1px 0 0">48.3</span>
    <span class="abs" style="left:124px;top:280px;font-size:12px;letter-spacing:-.5px">Pixels</span>
    <div class="abs" style="left:17px;top:308px;width:196px;height:5px;border-radius:2.500px;background:#b8b8b8;border:1px solid #a4a4a4"></div>
    <svg class="abs" style="left:117px;top:304px" width="13" height="12" viewBox="0 0 13 12"><path d="M6.500 .8 L11.500 5.200 V10.500 H1.500 V5.200Z" fill="#ddd" stroke="#6e6e6e" stroke-width="1"/></svg>
  </div>
  <svg class="abs" style="left:175px;top:398px" width="190" height="96" viewBox="175 398 190 96"><ellipse cx="268" cy="444.500" rx="80.500" ry="36.500" transform="rotate(-2 268 444.500)" fill="none" stroke="#f18a35" stroke-width="3.600"/></svg>
</div>
</body>
</html>
